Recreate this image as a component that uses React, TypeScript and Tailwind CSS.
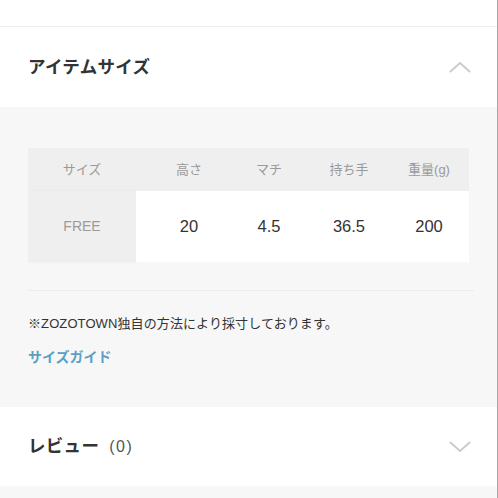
import React from "react";

const font = { fontFamily: '"Liberation Sans", "Noto Sans CJK JP", sans-serif' };

function ChevronUp() {
  return (
    <svg width="22" height="12" viewBox="0 0 22 12" fill="none">
      <path d="M1.5 10.5 L11 2 L20.5 10.5" stroke="#cccccc" strokeWidth="2" strokeLinecap="round" strokeLinejoin="round" />
    </svg>
  );
}
function ChevronDown() {
  return (
    <svg width="22" height="12" viewBox="0 0 22 12" fill="none">
      <path d="M1.5 1.5 L11 10 L20.5 1.5" stroke="#cccccc" strokeWidth="2" strokeLinecap="round" strokeLinejoin="round" />
    </svg>
  );
}

export default function App() {
  const heads = ["高さ", "マチ", "持ち手", "重量(g)"];
  const vals = ["20", "4.5", "36.5", "200"];
  return (
    <div style={font} className="w-[498px] h-[498px] bg-[#f7f7f7] border-r border-[#a8a8a8] overflow-hidden flex flex-col">
      <div className="h-[27px] bg-white border-b border-[#eeeeee] shrink-0" />
      <div className="h-[80px] bg-white flex items-center justify-between pl-[28px] pr-[26px] shrink-0">
        <span className="text-[17.5px] font-bold text-[#333333] tracking-[0.3px]">アイテムサイズ</span>
        <ChevronUp />
      </div>
      <div className="h-[300px] shrink-0 px-[28px] pt-[41px] flex flex-col">
        <div className="w-[441px] flex flex-col">
          <div className="h-[43px] bg-[#efefef] flex text-[13px] text-[#9a9a9a]">
            <div className="w-[108px] flex items-center justify-center">サイズ</div>
            <div className="w-[93px] pl-[13px] flex items-center justify-center">{heads[0]}</div>
            {heads.slice(1).map((h) => (
              <div key={h} className="w-[80px] flex items-center justify-center">{h}</div>
            ))}
          </div>
          <div className="h-[71px] flex">
            <div className="w-[108px] bg-[#efefef] flex items-center justify-center text-[14px] text-[#9a9a9a] shadow-[1px_0_2px_rgba(0,0,0,0.06)]">FREE</div>
            <div className="w-[93px] pl-[13px] bg-white flex items-center justify-center text-[16.5px] text-[#333333]">{vals[0]}</div>
            {vals.slice(1).map((v) => (
              <div key={v} className="w-[80px] bg-white flex items-center justify-center text-[16.5px] text-[#333333]">{v}</div>
            ))}
          </div>
        </div>
        <div className="mt-[28px] h-px bg-[#ececec] w-[446px]" />
        <div className="mt-[24px] text-[13px] text-[#333333] leading-[18px] tracking-[0.1px]">※ZOZOTOWN独自の方法により採寸しております。</div>
        <div className="mt-[15px] text-[14px] font-bold text-[#5b9fc4] leading-[18px]">サイズガイド</div>
      </div>
      <div className="h-[79px] bg-white flex items-center justify-between pl-[28px] pr-[26px] shrink-0">
        <div className="flex items-baseline">
          <span className="text-[17.5px] font-bold text-[#333333] tracking-[0.3px]">レビュー</span>
          <span className="ml-[10px] text-[16px] tracking-[1.5px] text-[#555555]">(0)</span>
        </div>
        <ChevronDown />
      </div>
      <div className="flex-1 bg-[#f7f7f7]" />
    </div>
  );
}
